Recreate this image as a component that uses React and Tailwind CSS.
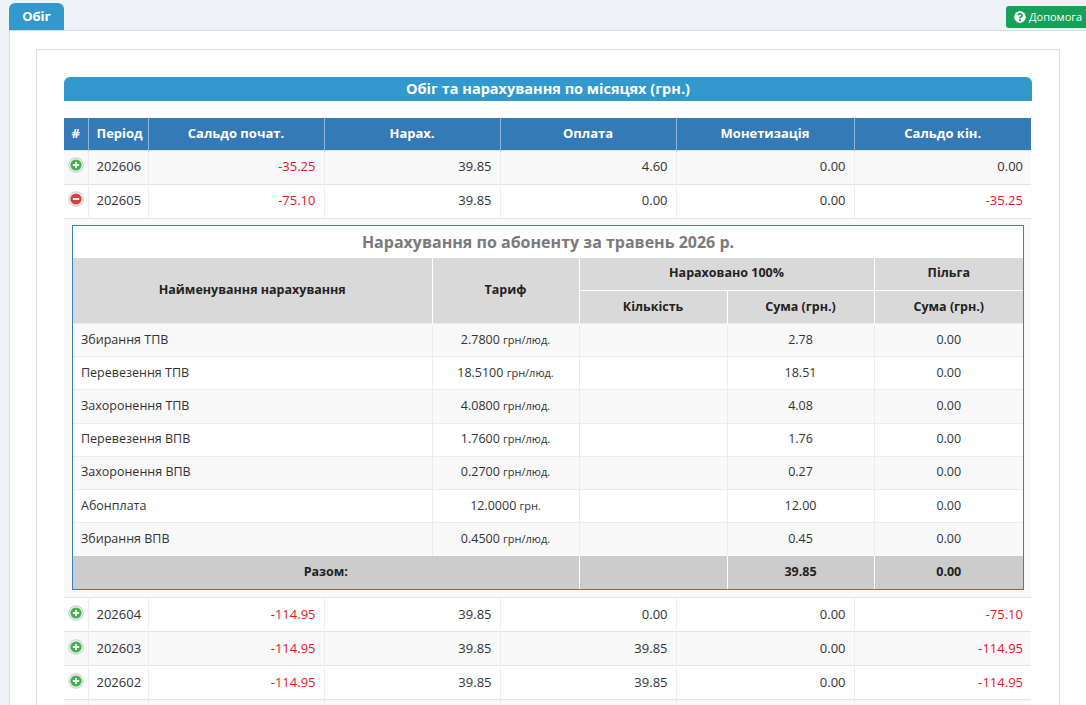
import React from "react";
import { FaQuestionCircle } from "react-icons/fa";

const font = { fontFamily: '"Open Sans", "Noto Sans", sans-serif' };

function RoundIcon({ plus }) {
  return (
    <svg width="16" height="16" viewBox="0 0 16 16" className="inline-block">
      <circle cx="8" cy="8" r="7.8" fill="#d2d2d2" />
      <circle cx="8" cy="8" r="6.6" fill="#f2f2f2" />
      <circle cx="8" cy="8" r="5.6" fill={plus ? "#3cb44a" : "#d9403c"} />
      <rect x="4.8" y="7.1" width="6.4" height="1.8" fill="#fff" rx="0.4" />
      {plus && <rect x="7.1" y="4.8" width="1.8" height="6.4" fill="#fff" rx="0.4" />}
    </svg>
  );
}

const rowsTop = [
  { p: "202606", s: "-35.25", n: "39.85", o: "4.60", m: "0.00", e: "0.00", plus: true },
  { p: "202605", s: "-75.10", n: "39.85", o: "0.00", m: "0.00", e: "-35.25", plus: false },
];
const rowsBottom = [
  { p: "202604", s: "-114.95", n: "39.85", o: "0.00", m: "0.00", e: "-75.10", plus: true },
  { p: "202603", s: "-114.95", n: "39.85", o: "39.85", m: "0.00", e: "-114.95", plus: true },
  { p: "202602", s: "-114.95", n: "39.85", o: "39.85", m: "0.00", e: "-114.95", plus: true },
  { p: "202601", s: "-114.95", n: "39.85", o: "39.85", m: "0.00", e: "-114.95", plus: true },
];

const charges = [
  ["Збирання ТПВ", "2.7800", "грн/люд.", "2.78"],
  ["Перевезення ТПВ", "18.5100", "грн/люд.", "18.51"],
  ["Захоронення ТПВ", "4.0800", "грн/люд.", "4.08"],
  ["Перевезення ВПВ", "1.7600", "грн/люд.", "1.76"],
  ["Захоронення ВПВ", "0.2700", "грн/люд.", "0.27"],
  ["Абонплата", "12.0000", "грн.", "12.00"],
  ["Збирання ВПВ", "0.4500", "грн/люд.", "0.45"],
];

function num(v) {
  return v.startsWith("-") ? "text-[#e3161b]" : "text-[#333]";
}

function MainRow({ r, odd }) {
  const td = "border-l border-[#eeeeee] px-2 text-right";
  return (
    <tr className={`h-[34px] border-t border-[#e4e4e4] ${odd ? "bg-[#f9f9f9]" : "bg-white"}`}>
      <td className="text-center align-middle">
        <span className="inline-flex pt-[2px]"><RoundIcon plus={r.plus} /></span>
      </td>
      <td className="border-l border-[#eeeeee] px-2 text-left text-[#333]">{r.p}</td>
      <td className={`${td} ${num(r.s)}`}>{r.s}</td>
      <td className={`${td} ${num(r.n)}`}>{r.n}</td>
      <td className={`${td} ${num(r.o)}`}>{r.o}</td>
      <td className={`${td} ${num(r.m)}`}>{r.m}</td>
      <td className={`${td} ${num(r.e)}`}>{r.e}</td>
    </tr>
  );
}

function Detail() {
  return (
    <div className="border border-[#3f7fb3] bg-white">
      <div className="h-[32px] flex items-center justify-center text-[16px] font-bold text-[#7a7a7a]">
        Нарахування по абоненту за травень 2026 р.
      </div>
      <table className="w-full table-fixed border-collapse text-[12.5px]">
        <colgroup>
          <col style={{ width: 359 }} />
          <col style={{ width: 147 }} />
          <col style={{ width: 148 }} />
          <col style={{ width: 147 }} />
          <col style={{ width: 149 }} />
        </colgroup>
        <thead className="bg-[#d9d9d9] text-[#222] font-bold">
          <tr className="h-[33px]">
            <th rowSpan={2} className="border-r border-white">Найменування нарахування</th>
            <th rowSpan={2} className="border-r border-white">Тариф</th>
            <th colSpan={2} className="border-r border-b border-white">Нараховано 100%</th>
            <th className="border-b border-white">Пільга</th>
          </tr>
          <tr className="h-[33px]">
            <th className="border-r border-white">Кількість</th>
            <th className="border-r border-white">Сума (грн.)</th>
            <th>Сума (грн.)</th>
          </tr>
        </thead>
        <tbody className="text-[#333]">
          {charges.map((c, i) => (
            <tr key={c[0]} className={`h-[33.2px] border-t border-[#ececec] ${i % 2 === 0 ? "bg-[#f9f9f9]" : "bg-white"}`}>
              <td className="px-2">{c[0]}</td>
              <td className="border-l border-[#ececec] text-center">
                {c[1]} <span className="text-[11px]">{c[2]}</span>
              </td>
              <td className="border-l border-[#ececec]"></td>
              <td className="border-l border-[#ececec] text-center">{c[3]}</td>
              <td className="border-l border-[#ececec] text-center">0.00</td>
            </tr>
          ))}
          <tr className="h-[33px] bg-[#cccccc] font-bold text-[#222]">
            <td colSpan={2} className="text-center">Разом:</td>
            <td className="border-l border-white"></td>
            <td className="border-l border-white text-center">39.85</td>
            <td className="border-l border-white text-center">0.00</td>
          </tr>
        </tbody>
      </table>
    </div>
  );
}

export default function App() {
  return (
    <div className="min-h-screen bg-[#eef1f6] text-[13px]" style={font}>
      <div className="flex h-[30px] items-start justify-between pl-[9px]">
        <div className="mt-[3px] flex h-[27px] w-[55px] items-center justify-center rounded-t-[6px] bg-[#3399cc] text-[13px] font-bold text-white">
          Обіг
        </div>
        <div className="mt-[6px] flex h-[22px] w-[80px] items-center gap-[3px] whitespace-nowrap rounded-l-[3px] bg-[#16a058] pl-[8px] text-[11px] text-white">
          <FaQuestionCircle className="shrink-0 text-[12px]" />
          <span>Допомога</span>
        </div>
      </div>
      <div className="ml-[9px] min-h-[675px] border-l border-t border-[#d7dde5] bg-white pl-[26px] pt-[18px]">
        <div className="w-[1024px] border border-[#dddddd] bg-white px-[27px] pt-[27px] pb-6">
          <div className="flex h-[24px] w-[968px] items-center justify-center rounded-t-[6px] bg-[#3399cc] text-[14.5px] font-bold text-white">
            Обіг та нарахування по місяцях (грн.)
          </div>
          <table className="mt-[17px] w-[967px] table-fixed border-collapse">
            <colgroup>
              <col style={{ width: 24 }} />
              <col style={{ width: 60 }} />
              <col style={{ width: 176 }} />
              <col style={{ width: 176 }} />
              <col style={{ width: 176 }} />
              <col style={{ width: 178 }} />
              <col style={{ width: 177 }} />
            </colgroup>
            <thead>
              <tr className="h-[32px] bg-[#337ab7] font-bold text-white">
                <th className="text-center">#</th>
                <th className="border-l border-[#8fb6d9] px-2 text-left">Період</th>
                <th className="border-l border-[#8fb6d9]">Сальдо почат.</th>
                <th className="border-l border-[#8fb6d9]">Нарах.</th>
                <th className="border-l border-[#8fb6d9]">Оплата</th>
                <th className="border-l border-[#8fb6d9]">Монетизація</th>
                <th className="border-l border-[#8fb6d9]">Сальдо кін.</th>
              </tr>
            </thead>
            <tbody>
              {rowsTop.map((r, i) => (
                <MainRow key={r.p} r={r} odd={i % 2 === 0} />
              ))}
              <tr className="border-t border-[#e4e4e4] bg-[#f9f9f9]">
                <td colSpan={7} className="pl-[8px] pr-[7px] pt-[6px] pb-[7px]">
                  <Detail />
                </td>
              </tr>
              {rowsBottom.map((r, i) => (
                <MainRow key={r.p} r={r} odd={i % 2 === 1} />
              ))}
            </tbody>
          </table>
        </div>
      </div>
    </div>
  );
}
